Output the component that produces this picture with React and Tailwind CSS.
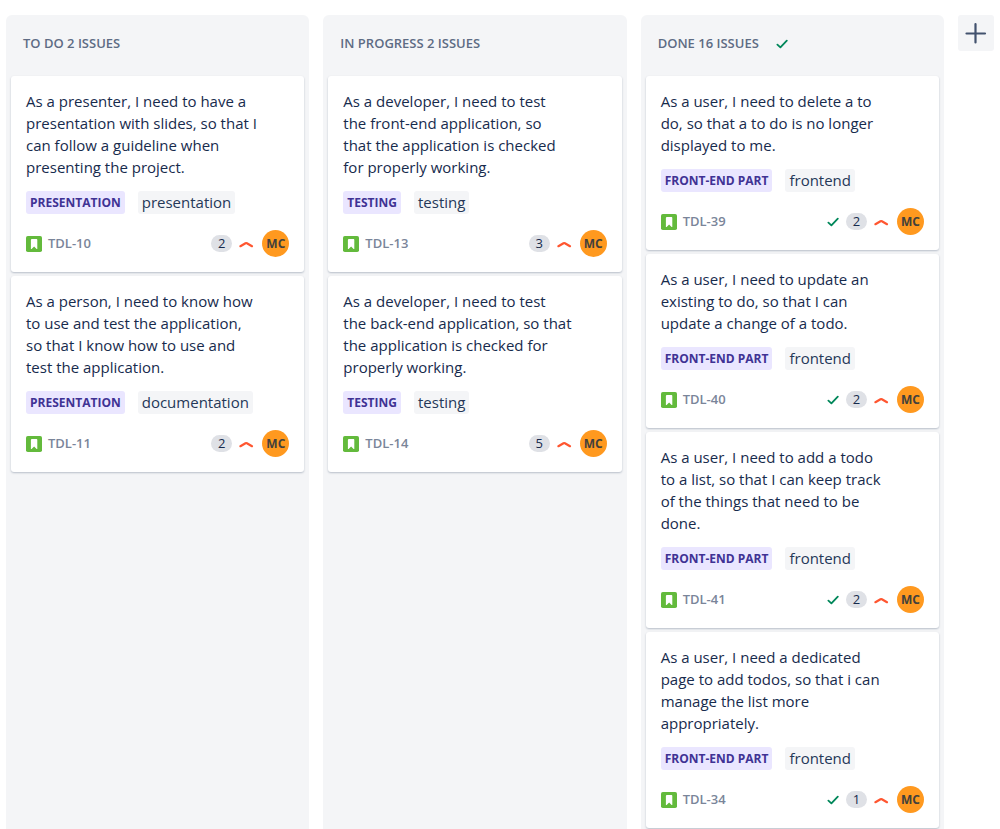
const columns = [
  {
    name: "TO DO 2 ISSUES",
    done: false,
    cards: [
      { id: "TDL-10", text: "As a presenter, I need to have a\npresentation with slides, so that I\ncan follow a guideline when\npresenting the project.", epic: "PRESENTATION", label: "presentation", points: 2 },
      { id: "TDL-11", text: "As a person, I need to know how\nto use and test the application,\nso that I know how to use and\ntest the application.", epic: "PRESENTATION", label: "documentation", points: 2 },
    ],
  },
  {
    name: "IN PROGRESS 2 ISSUES",
    done: false,
    cards: [
      { id: "TDL-13", text: "As a developer, I need to test\nthe front-end application, so\nthat the application is checked\nfor properly working.", epic: "TESTING", label: "testing", points: 3 },
      { id: "TDL-14", text: "As a developer, I need to test\nthe back-end application, so that\nthe application is checked for\nproperly working.", epic: "TESTING", label: "testing", points: 5 },
    ],
  },
  {
    name: "DONE 16 ISSUES",
    done: true,
    cards: [
      { id: "TDL-39", text: "As a user, I need to delete a to\ndo, so that a to do is no longer\ndisplayed to me.", epic: "FRONT-END PART", label: "frontend", points: 2 },
      { id: "TDL-40", text: "As a user, I need to update an\nexisting to do, so that I can\nupdate a change of a todo.", epic: "FRONT-END PART", label: "frontend", points: 2 },
      { id: "TDL-41", text: "As a user, I need to add a todo\nto a list, so that I can keep track\nof the things that need to be\ndone.", epic: "FRONT-END PART", label: "frontend", points: 2 },
      { id: "TDL-34", text: "As a user, I need a dedicated\npage to add todos, so that i can\nmanage the list more\nappropriately.", epic: "FRONT-END PART", label: "frontend", points: 1 },
    ],
  },
];

function Check() {
  return (
    <svg className="h-3 w-3 shrink-0" viewBox="0 0 12 12" fill="none" stroke="#00875a" strokeWidth="1.8" strokeLinecap="round" strokeLinejoin="round" aria-hidden="true">
      <path d="M1.4 6.6 4.4 9.4 10.8 2.6" />
    </svg>
  );
}

function Story() {
  return (
    <svg className="h-4 w-4 shrink-0" viewBox="0 0 16 16" aria-hidden="true">
      <rect width="16" height="16" rx="1.8" fill="#63ba3c" />
      <path d="M5.8 3.1h4.5c.6 0 1 .4 1 1v8.8h-.7L8.1 10.4l-2.5 2.5h-.7V4.1c0-.6.4-1 .9-1Z" fill="#fff" />
    </svg>
  );
}

function Priority() {
  return (
    <svg className="h-4 w-4 shrink-0" viewBox="0 0 16 16" fill="none" stroke="#ff5630" strokeWidth="2.2" strokeLinecap="round" strokeLinejoin="round" aria-hidden="true">
      <path d="M1.4 10.2 6.5 7.2Q7.2 6.8 7.9 7.2L13 10.2" />
    </svg>
  );
}

function Card({ card, done }) {
  return (
    <article className="rounded-[3px] bg-white px-[15px] pt-[14px] pb-[15px] shadow-[0_1px_2px_rgba(9,30,66,0.25)]">
      <p className="whitespace-pre-line text-[15px] leading-[22px] text-[#172b4d]">{card.text}</p>
      <div className="mt-[13px] flex h-[23px] gap-[13px]">
        <span className="flex items-center rounded-[3px] bg-[#eae6ff] px-1 text-xs font-bold text-[#403294]">{card.epic}</span>
        <span className="flex items-center rounded-[3px] bg-[#f4f5f7] px-1 pb-[2px] text-[15px] leading-5 text-[#253858]">{card.label}</span>
      </div>
      <div className="mt-4 flex h-[27px] items-center">
        <Story />
        <a href={"#" + card.id} className="ml-[6px] text-[13px] font-semibold text-[#7a8599]">{card.id}</a>
        <div className="ml-auto flex items-center gap-[7px]">
          {done && <Check />}
          <span className="flex h-[17px] w-[21px] items-center justify-center rounded-full bg-[#dfe1e6] text-[13px] text-[#172b4d]">{card.points}</span>
          <Priority />
          <span className="flex h-[27px] w-[27px] items-center justify-center rounded-full bg-[#ff991f] text-xs font-bold text-[#42403c]">MC</span>
        </div>
      </div>
    </article>
  );
}

export default function App() {
  return (
    <main className="flex min-h-screen gap-[14px] bg-white px-[6px] pt-[15px] font-['Open_Sans',sans-serif]">
      {columns.map((column) => (
        <section key={column.name} className="min-w-0 flex-1 rounded-t-md bg-[#f4f5f7] px-[5px]">
          <header className="flex h-[61px] items-center gap-[17px] px-3 pb-1">
            <h2 className="text-[13px] font-semibold text-[#5e6c84]">{column.name}</h2>
            {column.done && <Check />}
          </header>
          <div className="flex flex-col gap-1">
            {column.cards.map((card) => (
              <Card key={card.id} card={card} done={column.done} />
            ))}
          </div>
        </section>
      ))}
      <button type="button" aria-label="Add column" className="flex h-9 w-9 shrink-0 items-center justify-center rounded-[3px] bg-[#f4f5f7]">
        <svg className="h-6 w-6" viewBox="0 0 24 24" fill="none" stroke="#42526e" strokeWidth="2.2" strokeLinecap="round" aria-hidden="true">
          <path d="M11.5 3v18.5M2.5 12.5h18.5" />
        </svg>
      </button>
    </main>
  );
}
